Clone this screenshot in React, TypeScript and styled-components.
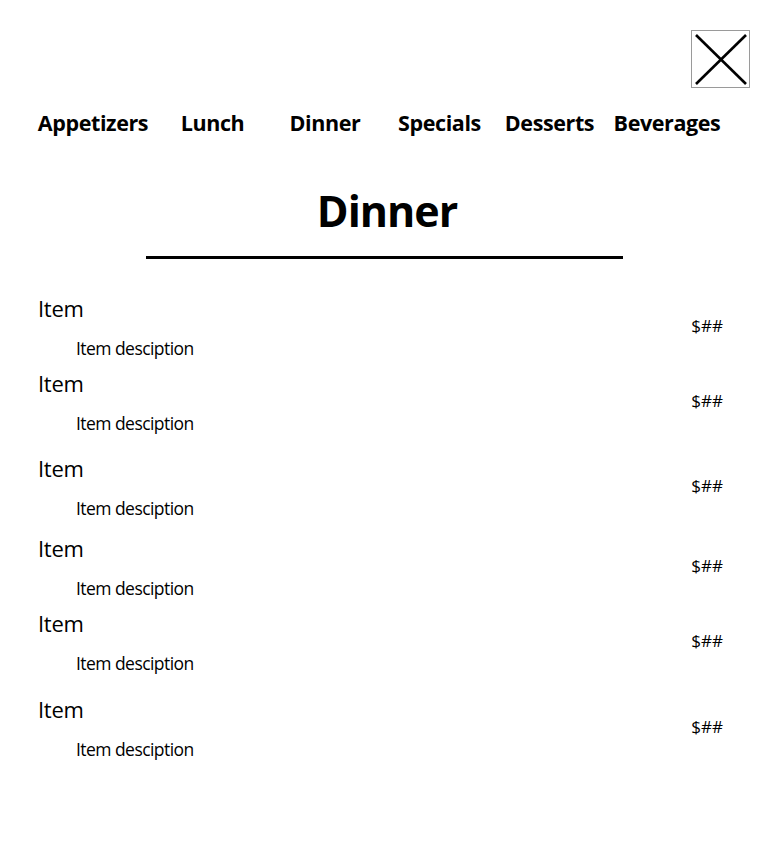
import React from "react";
import styled, { createGlobalStyle } from "styled-components";

const GlobalStyle = createGlobalStyle`
  html, body {
    margin: 0;
    padding: 0;
    background: #ffffff;
  }
  body {
    font-family: "Open Sans", "Noto Sans", sans-serif;
    color: #000000;
  }
`;

const Page = styled.div`
  width: 768px;
  min-height: 862px;
  box-sizing: border-box;
  padding: 30px 0 0 0;
  display: flex;
  flex-direction: column;
`;

const TopBar = styled.div`
  display: flex;
  justify-content: flex-end;
  padding-right: 18px;
`;

const CloseButton = styled.button`
  width: 59px;
  height: 58px;
  box-sizing: border-box;
  border: 1px solid #9a9a9a;
  background: #ffffff;
  padding: 0;
  margin: 0;
  display: flex;
  align-items: center;
  justify-content: center;
  cursor: pointer;
`;

const Nav = styled.nav`
  margin-top: 20px;
  display: grid;
  grid-template-columns: 114px 125px 100px 129px 91px 144px;
  padding-left: 36px;
`;

const NavItem = styled.a`
  font-size: 21.5px;
  font-weight: 700;
  line-height: 30px;
  text-align: center;
  letter-spacing: -0.4px;
  white-space: nowrap;
  color: #000000;
  text-decoration: none;
`;

const Title = styled.h1`
  margin: 44px 0 0 0;
  padding-left: 6px;
  font-size: 43px;
  font-weight: 700;
  line-height: 58px;
  text-align: center;
  letter-spacing: -1px;
`;

const Rule = styled.hr`
  margin: 16px auto 0 auto;
  width: 477px;
  height: 3px;
  border: none;
  background: #000000;
`;

const List = styled.ul`
  list-style: none;
  margin: 35px 0 0 0;
  padding: 0 45px 0 38px;
`;

const Row = styled.li<{ $gap: number }>`
  display: flex;
  justify-content: space-between;
  align-items: flex-start;
  margin-top: ${(p) => p.$gap}px;
`;

const ItemText = styled.div`
  display: flex;
  flex-direction: column;
`;

const ItemName = styled.div`
  font-size: 22px;
  font-weight: 400;
  line-height: 28px;
  letter-spacing: -0.3px;
`;

const ItemDesc = styled.div`
  margin-top: 14px;
  padding-left: 38px;
  font-size: 17.5px;
  line-height: 24px;
  letter-spacing: -0.55px;
`;

const Price = styled.div`
  margin-top: 20px;
  font-size: 17px;
  line-height: 24px;
`;

const categories = ["Appetizers", "Lunch", "Dinner", "Specials", "Desserts", "Beverages"];

const items = [
  { gap: 0 },
  { gap: 8.5 },
  { gap: 19.5 },
  { gap: 13.5 },
  { gap: 9.5 },
  { gap: 19.5 },
];

export default function App() {
  return (
    <>
      <GlobalStyle />
      <Page>
        <TopBar>
          <CloseButton aria-label="Close">
            <svg width="57" height="56" viewBox="0 0 57 56">
              <line x1="4" y1="4" x2="54" y2="53" stroke="#000" strokeWidth="2.6" />
              <line x1="54" y1="4" x2="4" y2="53" stroke="#000" strokeWidth="2.6" />
            </svg>
          </CloseButton>
        </TopBar>
        <Nav>
          {categories.map((c) => (
            <NavItem key={c}>{c}</NavItem>
          ))}
        </Nav>
        <Title>Dinner</Title>
        <Rule />
        <List>
          {items.map((it, i) => (
            <Row key={i} $gap={it.gap}>
              <ItemText>
                <ItemName>Item</ItemName>
                <ItemDesc>Item desciption</ItemDesc>
              </ItemText>
              <Price>$##</Price>
            </Row>
          ))}
        </List>
      </Page>
    </>
  );
}
